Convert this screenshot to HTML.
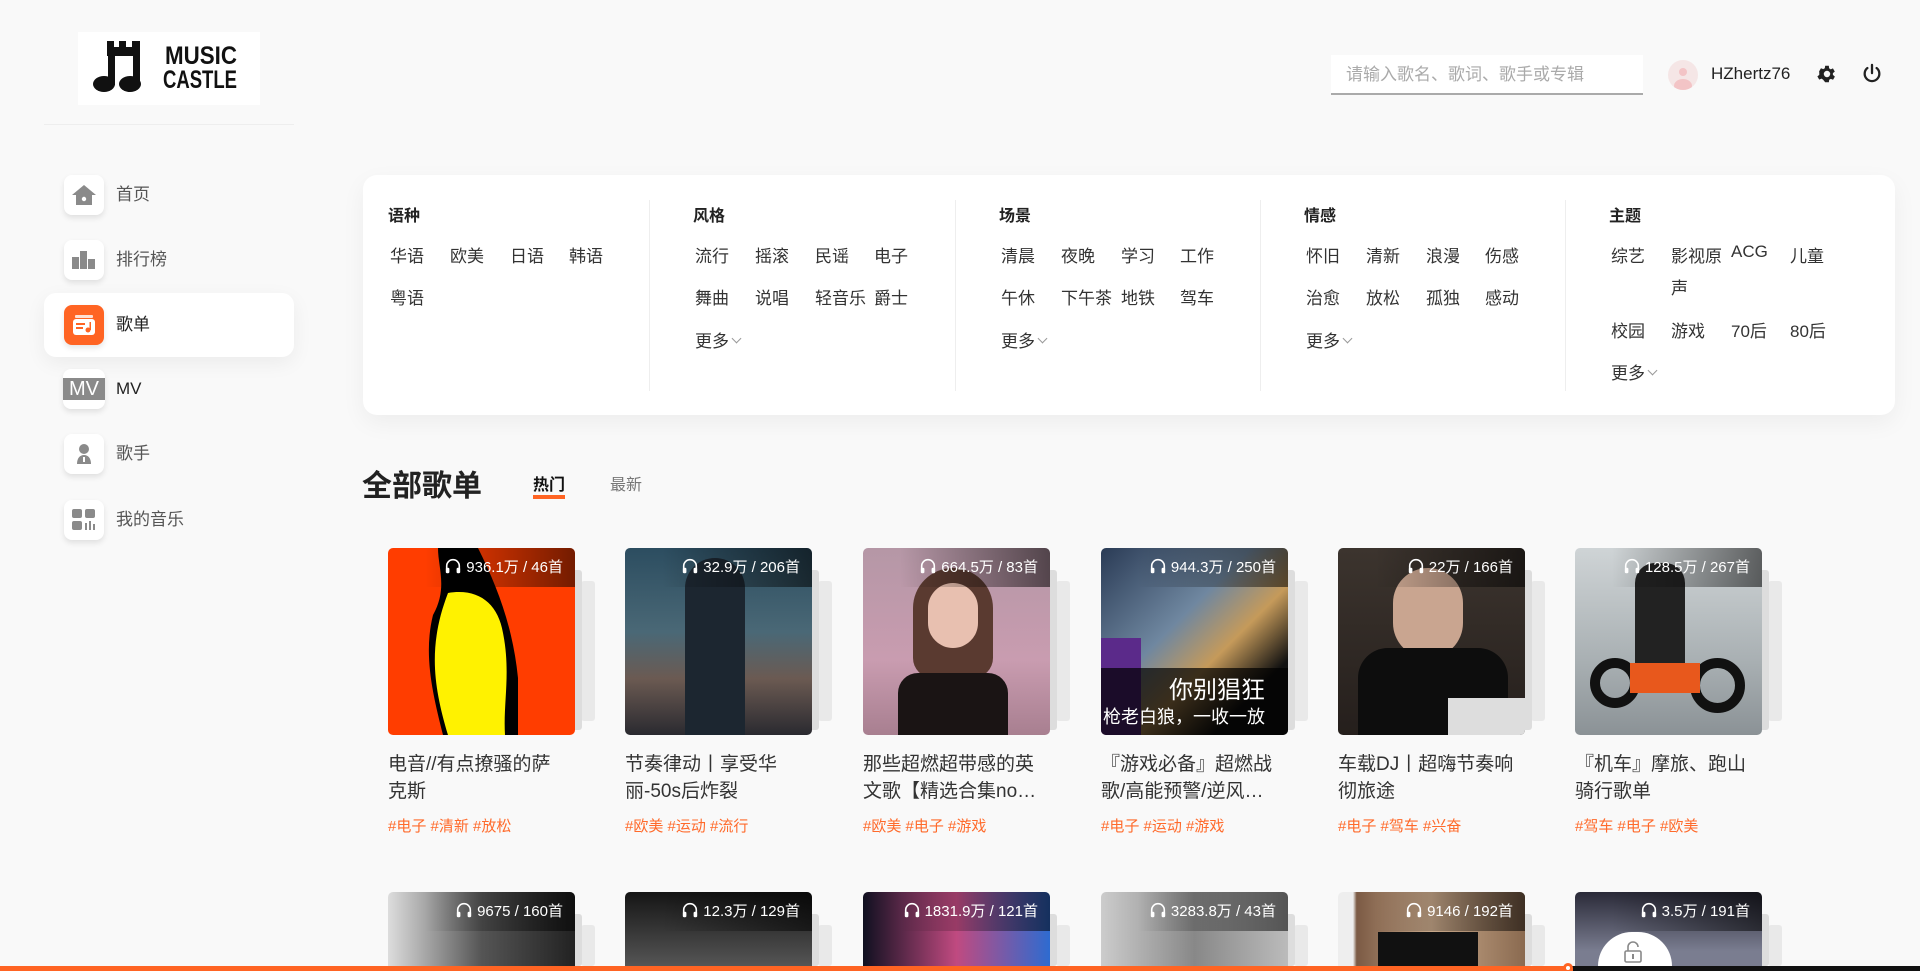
<!DOCTYPE html>
<html><head><meta charset="utf-8">
<style>
*{margin:0;padding:0;box-sizing:border-box}
html,body{width:1920px;height:971px;overflow:hidden}
body{background:#f9f9f9;font-family:"Liberation Sans","Noto Sans CJK SC",sans-serif;color:#333}
#root{position:relative;width:1920px;height:971px;overflow:hidden}
.abs{position:absolute}
.logo{left:78px;top:32px;width:182px;height:73px;background:#fff}
.hr{left:44px;top:124px;width:250px;height:1px;background:#eee}
.nav{left:64px;width:40px;height:40px;border-radius:8px;background:#fff;box-shadow:0 3px 6px rgba(0,0,0,.1);display:flex;align-items:center;justify-content:center}
.navt{left:116px;font-size:17px;color:#555;line-height:20px}
.active{left:44px;top:293px;width:250px;height:64px;background:#fff;border-radius:12px;box-shadow:0 6px 20px rgba(0,0,0,.06)}
.panel{left:363px;top:175px;width:1532px;height:240px;background:#fff;border-radius:14px;box-shadow:0 8px 24px rgba(0,0,0,.05)}
.div{top:200px;width:1px;height:191px;background:#eee}
.h{font-size:16px;font-weight:bold;color:#222}
.it{font-size:17px;color:#333;position:absolute;white-space:nowrap}
.more::after{content:"";display:inline-block;width:6px;height:6px;border-right:1px solid #999;border-bottom:1px solid #999;transform:rotate(45deg);margin-left:4px;position:relative;top:-5px}
.img{position:absolute;width:187px;height:187px;border-radius:5px;overflow:hidden}
.st1{position:absolute;width:14px;height:160px;background:#ddd;border-radius:3px}
.st2{position:absolute;width:14px;height:140px;background:#e9e9e9;border-radius:3px}
.r2 .img{height:74px;border-radius:5px 5px 0 0}
.r2 .st1{height:52px}.r2 .st2{height:41px}
.ov{position:absolute;right:0;top:0;height:39px;width:150px;background:linear-gradient(90deg,rgba(0,0,0,0),rgba(0,0,0,.55));color:#fff;font-size:15px;line-height:39px;text-align:right;padding-right:12px;white-space:nowrap}
.ov svg{vertical-align:-3px;margin-right:4px}
.ttl{position:absolute;font-size:19px;line-height:27px;color:#333;width:179px}
.tag{position:absolute;font-size:15px;color:#ff6a2b;white-space:nowrap}
</style></head><body><div id="root">

<div class="abs logo">
<svg width="182" height="73" viewBox="0 0 182 73">
<g fill="#111">
<rect x="29" y="9" width="7" height="9"/><rect x="41" y="9" width="7" height="9"/><rect x="54" y="9" width="8" height="9"/>
<rect x="29" y="15" width="33" height="9"/>
<rect x="30" y="15" width="7" height="38"/><rect x="55" y="15" width="7" height="38"/>
<ellipse cx="26" cy="52" rx="11" ry="8"/><ellipse cx="52" cy="52" rx="11" ry="8"/>
</g>
<text x="87" y="32" font-family="Liberation Sans" font-weight="bold" font-size="25" fill="#111" textLength="72" lengthAdjust="spacingAndGlyphs">MUSIC</text>
<text x="85" y="56" font-family="Liberation Sans" font-weight="bold" font-size="25" fill="#111" textLength="74" lengthAdjust="spacingAndGlyphs">CASTLE</text>
</svg></div>
<div class="abs hr"></div>

<div class="abs active"></div>
<div class="abs nav" style="top:175px"><svg width="26" height="22" viewBox="0 0 26 22"><path d="M13 1 1 11h4v10h16V11h4z" fill="#8a8a8a"/><circle cx="13" cy="15" r="2.2" fill="#fff"/></svg></div>
<div class="abs navt" style="top:185px">首页</div>
<div class="abs nav" style="top:240px"><svg width="24" height="18"><rect x="0" y="6" width="7" height="12" fill="#8a8a8a"/><rect x="8" y="0" width="7" height="18" fill="#8a8a8a"/><rect x="16" y="8" width="7" height="10" fill="#8a8a8a"/></svg></div>
<div class="abs navt" style="top:250px">排行榜</div>
<div class="abs nav" style="top:305px;background:#ff6423"><svg width="24" height="22"><rect x="3" y="1" width="18" height="3" rx="1" fill="#fff" opacity=".8"/><rect x="1" y="5" width="22" height="16" rx="3" fill="#fff"/><rect x="4" y="9" width="9" height="2" fill="#ff6423"/><rect x="4" y="13" width="7" height="2" fill="#ff6423"/><circle cx="16" cy="16" r="2.5" fill="#ff6423"/><rect x="17.5" y="8" width="1.5" height="8" fill="#ff6423"/></svg></div>
<div class="abs navt" style="top:315px;color:#222">歌单</div>
<div class="abs nav" style="top:369px;left:63px;width:42px"><div style="background:#8a8a8a;color:#fff;font-size:20px;width:42px;height:22px;line-height:22px;text-align:center">MV</div></div>
<div class="abs navt" style="top:379px;color:#222">MV</div>
<div class="abs nav" style="top:434px"><svg width="16" height="22"><circle cx="8" cy="6" r="5" fill="#8a8a8a"/><path d="M1 21c0-6 3-9 7-9s7 3 7 9z" fill="#8a8a8a"/><rect x="7" y="14" width="2" height="5" fill="#fff"/></svg></div>
<div class="abs navt" style="top:444px">歌手</div>
<div class="abs nav" style="top:500px"><svg width="24" height="22"><rect x="0" y="0" width="10" height="9" rx="2" fill="#8a8a8a"/><rect x="13" y="0" width="10" height="9" rx="2" fill="#8a8a8a"/><rect x="0" y="12" width="10" height="9" rx="2" fill="#8a8a8a"/><rect x="13" y="14" width="2" height="7" fill="#8a8a8a"/><rect x="17" y="12" width="2" height="9" fill="#8a8a8a"/><rect x="21" y="15" width="2" height="6" fill="#8a8a8a"/></svg></div>
<div class="abs navt" style="top:510px">我的音乐</div>

<!-- header right -->
<div class="abs" style="left:1331px;top:55px;width:312px;height:40px;background:#fff;border-bottom:2px solid #aaa;font-size:17px;color:#aaa;line-height:40px;padding-left:15px">请输入歌名、歌词、歌手或专辑</div>
<div class="abs" style="left:1668px;top:60px;width:30px;height:30px;border-radius:50%;background:#f5e6e6;overflow:hidden"><div style="position:absolute;left:11px;top:8px;width:8px;height:8px;border-radius:50%;background:#f3c4c6"></div><div style="position:absolute;left:6px;top:19px;width:18px;height:14px;border-radius:50%;background:#f3c4c6"></div></div>
<div class="abs" style="left:1711px;top:64px;font-size:17px;color:#222">HZhertz76</div>
<svg class="abs" style="left:1816px;top:63px" width="22" height="22" viewBox="0 0 24 24"><path fill="#222" d="M20.4 13a7.5 7.5 0 0 0 0-2l2.1-1.6-2-3.5-2.5 1a7 7 0 0 0-1.7-1L16 3h-4l-.4 2.7a7 7 0 0 0-1.7 1l-2.5-1-2 3.5L5.6 11a7.5 7.5 0 0 0 0 2l-2.1 1.6 2 3.5 2.5-1a7 7 0 0 0 1.7 1L12 21h4l.4-2.7a7 7 0 0 0 1.7-1l2.5 1 2-3.5zM14 15.5a3.5 3.5 0 1 1 0-7 3.5 3.5 0 0 1 0 7z" transform="translate(-2 0)"/></svg>
<svg class="abs" style="left:1861px;top:63px" width="22" height="22" viewBox="0 0 24 24"><path d="M12 2v9M7 5.5a8 8 0 1 0 10 0" stroke="#222" stroke-width="2.5" fill="none" stroke-linecap="round"/></svg>

<!-- category panel -->
<div class="abs panel"></div>
<div class="abs div" style="left:649px"></div><div class="abs div" style="left:955px"></div><div class="abs div" style="left:1260px"></div><div class="abs div" style="left:1565px"></div>

<div class="abs h" style="left:388px;top:202px">语种</div>
<div class="it" style="left:390px;top:242px">华语</div><div class="it" style="left:450px;top:242px">欧美</div><div class="it" style="left:510px;top:242px">日语</div><div class="it" style="left:569px;top:242px">韩语</div>
<div class="it" style="left:390px;top:284px">粤语</div>

<div class="abs h" style="left:693px;top:202px">风格</div>
<div class="it" style="left:695px;top:242px">流行</div><div class="it" style="left:755px;top:242px">摇滚</div><div class="it" style="left:815px;top:242px">民谣</div><div class="it" style="left:874px;top:242px">电子</div>
<div class="it" style="left:695px;top:284px">舞曲</div><div class="it" style="left:755px;top:284px">说唱</div><div class="it" style="left:815px;top:284px">轻音乐</div><div class="it" style="left:874px;top:284px">爵士</div>
<div class="it more" style="left:695px;top:327px">更多</div>

<div class="abs h" style="left:999px;top:202px">场景</div>
<div class="it" style="left:1001px;top:242px">清晨</div><div class="it" style="left:1061px;top:242px">夜晚</div><div class="it" style="left:1121px;top:242px">学习</div><div class="it" style="left:1180px;top:242px">工作</div>
<div class="it" style="left:1001px;top:284px">午休</div><div class="it" style="left:1061px;top:284px">下午茶</div><div class="it" style="left:1121px;top:284px">地铁</div><div class="it" style="left:1180px;top:284px">驾车</div>
<div class="it more" style="left:1001px;top:327px">更多</div>

<div class="abs h" style="left:1304px;top:202px">情感</div>
<div class="it" style="left:1306px;top:242px">怀旧</div><div class="it" style="left:1366px;top:242px">清新</div><div class="it" style="left:1426px;top:242px">浪漫</div><div class="it" style="left:1485px;top:242px">伤感</div>
<div class="it" style="left:1306px;top:284px">治愈</div><div class="it" style="left:1366px;top:284px">放松</div><div class="it" style="left:1426px;top:284px">孤独</div><div class="it" style="left:1485px;top:284px">感动</div>
<div class="it more" style="left:1306px;top:327px">更多</div>

<div class="abs h" style="left:1609px;top:202px">主题</div>
<div class="it" style="left:1611px;top:242px">综艺</div><div class="it" style="left:1671px;top:242px">影视原</div><div class="it" style="left:1671px;top:274px">声</div><div class="it" style="left:1731px;top:242px">ACG</div><div class="it" style="left:1790px;top:242px">儿童</div>
<div class="it" style="left:1611px;top:317px">校园</div><div class="it" style="left:1671px;top:317px">游戏</div><div class="it" style="left:1731px;top:317px">70后</div><div class="it" style="left:1790px;top:317px">80后</div>
<div class="it more" style="left:1611px;top:359px">更多</div>

<!-- title -->
<div class="abs" style="left:362px;top:461px;font-size:30px;font-weight:bold;color:#222">全部歌单</div>
<div class="abs" style="left:533px;top:477px;font-size:16px;font-weight:bold;color:#111;border-bottom:4px solid #ff6423;line-height:18px">热门</div>
<div class="abs" style="left:610px;top:477px;font-size:16px;color:#777;line-height:18px">最新</div>

<svg width="0" height="0" style="position:absolute"><defs><symbol id="hp" viewBox="0 0 20 20"><path d="M3 13V10a7 7 0 0 1 14 0v3" stroke="#fff" stroke-width="1.8" fill="none"/><rect x="2" y="12" width="4" height="6" rx="1.5" fill="#fff"/><rect x="14" y="12" width="4" height="6" rx="1.5" fill="#fff"/></symbol></defs></svg>

<!-- row 1 -->
<div class="abs" style="left:388px;top:548px">
<div class="st2" style="left:193px;top:33px"></div><div class="st1" style="left:180px;top:22px"></div>
<div class="img" style="background:#ff3d00"><svg width="187" height="187"><path d="M50 0h40c20 40 35 80 40 130l0 57H55c-10-40-20-80-10-120C60 40 50 20 50 0z" fill="#000"/><path d="M60 45c30-5 50 10 55 40 8 40 0 70 2 102H60c-15-50-20-90 0-142z" fill="#fff200"/></svg><div class="ov"><svg width="18" height="18"><use href="#hp"/></svg>936.1万 / 46首</div></div>
<div class="ttl" style="top:203px">电音//有点撩骚的萨克斯</div><div class="tag" style="top:267px">#电子 #清新 #放松</div></div>

<div class="abs" style="left:625px;top:548px">
<div class="st2" style="left:193px;top:33px"></div><div class="st1" style="left:180px;top:22px"></div>
<div class="img" style="background:linear-gradient(180deg,#2c4d60 0%,#4a6876 45%,#6b5a52 70%,#2a2a30 100%)"><div style="position:absolute;left:60px;top:10px;width:60px;height:177px;background:#1c2630;border-radius:30px 30px 0 0"></div><div class="ov"><svg width="18" height="18"><use href="#hp"/></svg>32.9万 / 206首</div></div>
<div class="ttl" style="top:203px;width:187px">节奏律动丨享受华丽-50s后炸裂</div><div class="tag" style="top:267px">#欧美 #运动 #流行</div></div>

<div class="abs" style="left:863px;top:548px">
<div class="st2" style="left:193px;top:33px"></div><div class="st1" style="left:180px;top:22px"></div>
<div class="img" style="background:linear-gradient(180deg,#b597a6,#c99cb0 60%,#a87f90)"><div style="position:absolute;left:50px;top:20px;width:80px;height:110px;background:#5a3a30;border-radius:40px 40px 20px 20px"></div><div style="position:absolute;left:65px;top:35px;width:50px;height:65px;background:#e8c0b0;border-radius:25px"></div><div style="position:absolute;left:35px;top:125px;width:110px;height:62px;background:#1a1414;border-radius:20px 20px 0 0"></div><div class="ov"><svg width="18" height="18"><use href="#hp"/></svg>664.5万 / 83首</div></div>
<div class="ttl" style="top:203px">那些超燃超带感的英文歌【精选合集no…</div><div class="tag" style="top:267px">#欧美 #电子 #游戏</div></div>

<div class="abs" style="left:1101px;top:548px">
<div class="st2" style="left:193px;top:33px"></div><div class="st1" style="left:180px;top:22px"></div>
<div class="img" style="background:linear-gradient(135deg,#2a3b55,#6f87a0 40%,#c59a5a 60%,#111 80%)"><div style="position:absolute;left:0;top:90px;width:40px;height:97px;background:#5b2a8a"></div><div style="position:absolute;left:0;top:120px;width:187px;height:67px;background:rgba(0,0,0,.7)"></div><div style="position:absolute;left:68px;top:122px;color:#fff;font-size:24px">你别猖狂</div><div style="position:absolute;left:2px;top:155px;color:#fff;font-size:18px;white-space:nowrap">枪老白狼，一收一放</div><div class="ov"><svg width="18" height="18"><use href="#hp"/></svg>944.3万 / 250首</div></div>
<div class="ttl" style="top:203px">『游戏必备』超燃战歌/高能预警/逆风…</div><div class="tag" style="top:267px">#电子 #运动 #游戏</div></div>

<div class="abs" style="left:1338px;top:548px">
<div class="st2" style="left:193px;top:33px"></div><div class="st1" style="left:180px;top:22px"></div>
<div class="img" style="background:linear-gradient(180deg,#3c342e,#251f1c)"><div style="position:absolute;left:55px;top:20px;width:70px;height:90px;background:#c9a590;border-radius:35px"></div><div style="position:absolute;left:20px;top:100px;width:150px;height:87px;background:#0d0d0d;border-radius:30px 30px 0 0"></div><div style="position:absolute;left:110px;top:150px;width:77px;height:37px;background:#ddd"></div><div class="ov"><svg width="18" height="18"><use href="#hp"/></svg>22万 / 166首</div></div>
<div class="ttl" style="top:203px">车载DJ丨超嗨节奏响彻旅途</div><div class="tag" style="top:267px">#电子 #驾车 #兴奋</div></div>

<div class="abs" style="left:1575px;top:548px">
<div class="st2" style="left:193px;top:33px"></div><div class="st1" style="left:180px;top:22px"></div>
<div class="img" style="background:linear-gradient(180deg,#cfd4d6,#a9b0b3 60%,#8b9296)"><div style="position:absolute;left:60px;top:15px;width:50px;height:120px;background:#222;border-radius:20px"></div><div style="position:absolute;left:15px;top:110px;width:50px;height:50px;border:10px solid #111;border-radius:50%"></div><div style="position:absolute;left:115px;top:110px;width:55px;height:55px;border:10px solid #111;border-radius:50%"></div><div style="position:absolute;left:55px;top:115px;width:70px;height:30px;background:#e8581c"></div><div class="ov"><svg width="18" height="18"><use href="#hp"/></svg>128.5万 / 267首</div></div>
<div class="ttl" style="top:203px">『机车』摩旅、跑山骑行歌单</div><div class="tag" style="top:267px">#驾车 #电子 #欧美</div></div>

<!-- row 2 -->
<div class="abs r2" style="left:388px;top:892px"><div class="st2" style="left:193px;top:33px"></div><div class="st1" style="left:180px;top:22px"></div><div class="img" style="background:linear-gradient(90deg,#ddd,#555 50%,#222)"><div class="ov"><svg width="18" height="18"><use href="#hp"/></svg>9675 / 160首</div></div></div>
<div class="abs r2" style="left:625px;top:892px"><div class="st2" style="left:193px;top:33px"></div><div class="st1" style="left:180px;top:22px"></div><div class="img" style="background:linear-gradient(180deg,#151515,#555)"><div class="ov"><svg width="18" height="18"><use href="#hp"/></svg>12.3万 / 129首</div></div></div>
<div class="abs r2" style="left:863px;top:892px"><div class="st2" style="left:193px;top:33px"></div><div class="st1" style="left:180px;top:22px"></div><div class="img" style="background:linear-gradient(90deg,#101020,#c04a80 50%,#2e6bd0)"><div class="ov"><svg width="18" height="18"><use href="#hp"/></svg>1831.9万 / 121首</div></div></div>
<div class="abs r2" style="left:1101px;top:892px"><div class="st2" style="left:193px;top:33px"></div><div class="st1" style="left:180px;top:22px"></div><div class="img" style="background:linear-gradient(90deg,#ccc,#888 50%,#bbb)"><div class="ov"><svg width="18" height="18"><use href="#hp"/></svg>3283.8万 / 43首</div></div></div>
<div class="abs r2" style="left:1338px;top:892px"><div class="st2" style="left:193px;top:33px"></div><div class="st1" style="left:180px;top:22px"></div><div class="img" style="background:linear-gradient(90deg,#eee 8%,#7b5a44 10%,#c8a88a 50%,#8a6a50)"><div style="position:absolute;left:40px;top:40px;width:100px;height:40px;background:#111"></div><div class="ov"><svg width="18" height="18"><use href="#hp"/></svg>9146 / 192首</div></div></div>
<div class="abs r2" style="left:1575px;top:892px"><div class="st2" style="left:193px;top:33px"></div><div class="st1" style="left:180px;top:22px"></div><div class="img" style="background:linear-gradient(180deg,#2a2a38,#7a7d90 80%)"><div class="ov"><svg width="18" height="18"><use href="#hp"/></svg>3.5万 / 191首</div></div></div>

<div class="abs" style="left:1598px;top:932px;width:74px;height:34px;border-radius:37px 37px 0 0;background:#fff"></div>
<svg class="abs" style="left:1623px;top:941px" width="20" height="22" viewBox="0 0 20 22"><path d="M5 10V6a5 5 0 0 1 10 0" stroke="#888" stroke-width="1.6" fill="none"/><rect x="2" y="10" width="16" height="11" rx="1.5" stroke="#888" stroke-width="1.6" fill="none"/><rect x="9" y="13" width="2" height="5" fill="#888"/></svg>

<div class="abs" style="left:0;top:966px;width:1920px;height:5px;background:#111"></div>
<div class="abs" style="left:0;top:966px;width:1568px;height:5px;background:#ff6423"></div>
<div class="abs" style="left:1563px;top:963px;width:10px;height:8px;border-radius:5px 5px 0 0;background:#ff6423"></div>
<div class="abs" style="left:1566px;top:966px;width:4px;height:4px;border-radius:50%;background:#fff"></div>
</div></body></html>
